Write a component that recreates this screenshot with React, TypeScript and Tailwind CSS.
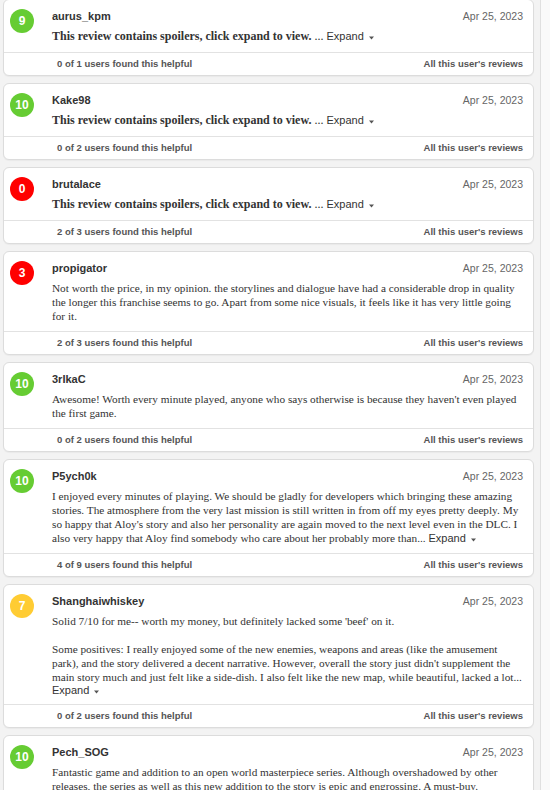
import React from "react";

type Review = {
  score: number;
  user: string;
  date: string;
  body?: string[];
  spoiler?: boolean;
  expand?: boolean;
  expandNewLine?: boolean;
  helpful: string;
};

const reviews: Review[] = [
  { score: 9, user: "aurus_kpm", date: "Apr 25, 2023", spoiler: true, helpful: "0 of 1 users found this helpful" },
  { score: 10, user: "Kake98", date: "Apr 25, 2023", spoiler: true, helpful: "0 of 2 users found this helpful" },
  { score: 0, user: "brutalace", date: "Apr 25, 2023", spoiler: true, helpful: "2 of 3 users found this helpful" },
  {
    score: 3,
    user: "propigator",
    date: "Apr 25, 2023",
    body: [
      "Not worth the price, in my opinion. the storylines and dialogue have had a considerable drop in quality the longer this franchise seems to go. Apart from some nice visuals, it feels like it has very little going for it.",
    ],
    helpful: "2 of 3 users found this helpful",
  },
  {
    score: 10,
    user: "3rIkaC",
    date: "Apr 25, 2023",
    body: [
      "Awesome! Worth every minute played, anyone who says otherwise is because they haven't even played the first game.",
    ],
    helpful: "0 of 2 users found this helpful",
  },
  {
    score: 10,
    user: "P5ych0k",
    date: "Apr 25, 2023",
    body: [
      "I enjoyed every minutes of playing. We should be gladly for developers which bringing these amazing stories. The atmosphere from the very last mission is still written in from off my eyes pretty deeply. My so happy that Aloy's story and also her personality are again moved to the next level even in the DLC. I also very happy that Aloy find somebody who care about her probably more than...",
    ],
    expand: true,
    helpful: "4 of 9 users found this helpful",
  },
  {
    score: 7,
    user: "Shanghaiwhiskey",
    date: "Apr 25, 2023",
    body: [
      "Solid 7/10 for me-- worth my money, but definitely lacked some 'beef' on it.",
      "Some positives: I really enjoyed some of the new enemies, weapons and areas (like the amusement park), and the story delivered a decent narrative. However, overall the story just didn't supplement the main story much and just felt like a side-dish. I also felt like the new map, while beautiful, lacked a lot...",
    ],
    expand: true,
    expandNewLine: true,
    helpful: "0 of 2 users found this helpful",
  },
  {
    score: 10,
    user: "Pech_SOG",
    date: "Apr 25, 2023",
    body: [
      "Fantastic game and addition to an open world masterpiece series. Although overshadowed by other releases, the series as well as this new addition to the story is epic and engrossing. A must-buy.",
    ],
    helpful: "0 of 2 users found this helpful",
  },
];

const scoreColor = (s: number) =>
  s >= 8 ? "bg-[#66cc33]" : s >= 5 ? "bg-[#ffcc33]" : "bg-[#ff0000]";

const Expand = () => (
  <span className="font-['Liberation_Sans',Arial,sans-serif] text-[11px] text-[#333] whitespace-nowrap">
    Expand
    <svg width="7" height="7" viewBox="0 0 7 7" className="inline-block ml-[4px] align-middle">
      <path d="M1 2.5 L6 2.5 L3.5 5.5 Z" fill="#555" />
    </svg>
  </span>
);

const ReviewCard = ({ r }: { r: Review }) => (
  <div className="bg-white border border-[#dcdcdc] rounded-[6px] shadow-[0_1px_1px_rgba(0,0,0,0.04)]">
    <div className="flex pl-[6px] pr-[10px] pt-[9px] pb-[8px]">
      <div
        className={`${scoreColor(r.score)} w-[24px] h-[24px] rounded-full flex items-center justify-center text-white font-bold text-[12px] font-['Liberation_Sans',Arial,sans-serif] shrink-0`}
      >
        {r.score}
      </div>
      <div className="ml-[18px] flex-1 min-w-0">
        <div className="flex justify-between items-center h-[14px]">
          <span className="font-['Liberation_Sans',Arial,sans-serif] font-bold text-[11px] text-[#333]">
            {r.user}
          </span>
          <span className="font-['Liberation_Sans',Arial,sans-serif] text-[10.5px] text-[#666] mt-[2px]">
            {r.date}
          </span>
        </div>
        <div className="mt-[6px] font-['Liberation_Serif','Times_New_Roman',serif] text-[11.25px] leading-[14px] text-[#333]">
          {r.spoiler ? (
            <p className="text-[12px] leading-[15px]">
              <span className="font-bold">This review contains spoilers, click expand to view.</span>{" "}
              ... <Expand />
            </p>
          ) : (
            r.body!.map((p, i) => (
              <p key={i} className={i > 0 ? "mt-[14px]" : ""}>
                {p}
                {r.expand && !r.expandNewLine && i === r.body!.length - 1 && (
                  <>
                    {" "}
                    <Expand />
                  </>
                )}
              </p>
            ))
          )}
          {r.expandNewLine && (
            <p className="leading-[12px]">
              <Expand />
            </p>
          )}
        </div>
      </div>
    </div>
    <div className="border-t border-[#e2e2e2] h-[23px] flex items-center justify-between pl-[53px] pr-[10px] font-['Liberation_Sans',Arial,sans-serif] font-bold text-[9.5px] text-[#555]">
      <span>{r.helpful}</span>
      <span>All this user's reviews</span>
    </div>
  </div>
);

export default function App() {
  return (
    <div className="w-[550px] h-[790px] overflow-hidden bg-[#fafafa]">
      <div className="w-[541px] min-h-full bg-[#f3f3f3] border-r border-[#e0e0e0] pl-[3px] pr-[6px] -mt-px flex flex-col gap-[7px]">
        {reviews.map((r) => (
          <ReviewCard key={r.user} r={r} />
        ))}
      </div>
    </div>
  );
}
